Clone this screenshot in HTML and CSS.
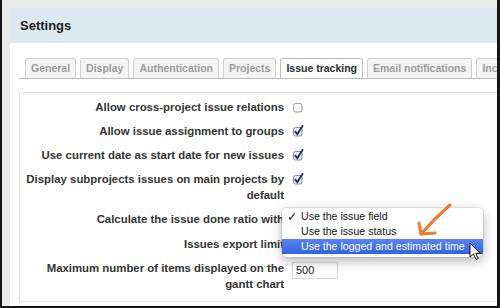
FILE: index.html
```html
<!DOCTYPE html>
<html lang="en">
  <head>
    <meta charset="UTF-8" />
    <title>Settings</title>
    <link rel="stylesheet" href="styles.css">
  </head>
  <body>
    <div class="window">
      <div class="panel">
        <div class="page-header">
          <h2>Settings</h2>
        </div>
        <div class="content">
          <ul class="tabs">
            <li>General</li>
            <li>Display</li>
            <li>Authentication</li>
            <li>Projects</li>
            <li class="selected">Issue tracking</li>
            <li>Email notifications</li>
            <li>Incoming emails</li>
          </ul>
          <div class="box">
            <div class="row">
              <label>Allow cross-project issue relations</label>
              <span class="check">
                <svg width="12" height="12" viewBox="0 0 12 12"><rect x="1.5" y="2.5" width="8.5" height="8.5" rx="2" fill="#fafafa" stroke="#9a9a9a"/></svg>
              </span>
            </div>
            <div class="row">
              <label>Allow issue assignment to groups</label>
              <span class="check">
                <svg width="12" height="12" viewBox="0 0 12 12"><rect x="1.5" y="2.5" width="8.5" height="8.5" rx="2" fill="#e9eef7" stroke="#7d89a3"/><path d="M3.3 6.6 L5.3 9.3 L10.6 1" fill="none" stroke="#1b2a5c" stroke-width="1.8" stroke-linecap="round" stroke-linejoin="round"/></svg>
              </span>
            </div>
            <div class="row">
              <label>Use current date as start date for new issues</label>
              <span class="check">
                <svg width="12" height="12" viewBox="0 0 12 12"><rect x="1.5" y="2.5" width="8.5" height="8.5" rx="2" fill="#e9eef7" stroke="#7d89a3"/><path d="M3.3 6.6 L5.3 9.3 L10.6 1" fill="none" stroke="#1b2a5c" stroke-width="1.8" stroke-linecap="round" stroke-linejoin="round"/></svg>
              </span>
            </div>
            <div class="row">
              <label>Display subprojects issues on main projects by default</label>
              <span class="check">
                <svg width="12" height="12" viewBox="0 0 12 12"><rect x="1.5" y="2.5" width="8.5" height="8.5" rx="2" fill="#e9eef7" stroke="#7d89a3"/><path d="M3.3 6.6 L5.3 9.3 L10.6 1" fill="none" stroke="#1b2a5c" stroke-width="1.8" stroke-linecap="round" stroke-linejoin="round"/></svg>
              </span>
            </div>
            <div class="row menu-row">
              <label>Calculate the issue done ratio with</label>
              <span class="select"></span>
              <ul class="dropdown">
                <li class="checked">Use the issue field</li>
                <li>Use the issue status</li>
                <li class="hover">Use the logged and estimated time</li>
              </ul>
            </div>
            <div class="row">
              <label>Issues export limit</label>
              <span class="field"></span>
            </div>
            <div class="row">
              <label>Maximum number of items displayed on the gantt chart</label>
              <span class="field">500</span>
            </div>
          </div>
        </div>
      </div>
      <svg class="arrow" width="85" height="80" viewBox="0 0 85 80">
        <path d="M40 15 Q25 28 11 44" fill="none" stroke="#ef7a2c" stroke-width="3" stroke-linecap="round"/>
        <path d="M9 33 L11 44 L25 43" fill="none" stroke="#ef7a2c" stroke-width="3" stroke-linecap="round" stroke-linejoin="round"/>
        <path d="M60 53 L60 67 L63.5 64 L66 69.5 L68.2 68.5 L65.8 63.3 L70.5 63.3 Z" fill="#f4f4f4" stroke="#111" stroke-width="1" stroke-linejoin="round"/>
      </svg>
    </div>
  </body>
</html>
```

FILE: styles.css
```css
html,
body {
  margin: 0;
  padding: 0;
  font-family: "Liberation Sans", Arial, sans-serif;
  color: #333;
}

.window {
  position: relative;
  height: 308px;
  box-sizing: border-box;
  border-left: 2px solid #161616;
  border-right: 3px solid #161616;
  border-bottom: 2px solid #161616;
  background: #e9e9e9;
  padding: 8px 0 0 8px;
  display: flex;
  flex-direction: column;
  overflow: hidden;
}

.panel {
  flex: 1;
  min-height: 0;
  background: #ffffff;
  display: flex;
  flex-direction: column;
  overflow: hidden;
}

.page-header {
  height: 35px;
  flex-shrink: 0;
  background: #dde9f0;
  padding-left: 10px;
  display: flex;
  align-items: center;
}

.page-header h2 {
  margin: 0;
  font-size: 13px;
  color: #1c1c1c;
}

.content {
  padding: 15px 0 0 9px;
}

.tabs {
  display: flex;
  gap: 4px;
  margin: 0;
  padding: 0 0 0 6px;
  list-style: none;
  height: 20px;
  border-bottom: 1px solid #bcbcbc;
  overflow: hidden;
  white-space: nowrap;
}

.tabs li {
  flex-shrink: 0;
  height: 19px;
  line-height: 19px;
  padding: 0 5px;
  font-size: 10.5px;
  font-weight: bold;
  color: #9b9b9b;
  background: #f4f4f4;
  border: 1px solid #cfcfcf;
  border-bottom: none;
  border-radius: 3px 3px 0 0;
}

.tabs li.selected {
  color: #2e2e2e;
  background: #ffffff;
  border-color: #bcbcbc;
  height: 20px;
}

.box {
  margin: 13px -6px 0 0;
  padding: 2px 0 5px;
  border: 1px solid #e2e2e2;
  background: #ffffff;
}

.row {
  display: flex;
  align-items: flex-start;
  padding: 4px 0;
  line-height: 16px;
}

.row label {
  width: 264px;
  flex-shrink: 0;
  text-align: right;
  font-size: 11.4px;
  font-weight: bold;
  color: #333;
}

.check {
  margin-left: 8px;
  margin-top: 1px;
  height: 12px;
}

.select {
  margin-left: 8px;
  width: 150px;
  height: 15px;
  border: 1px solid #c8c8c8;
  border-radius: 3px;
}

.field {
  margin: 2px 0 -3px 8px;
  width: 41px;
  height: 15px;
  line-height: 15px;
  padding-left: 3px;
  border: 1px solid #d6d6d6;
  font-size: 11px;
  color: #222;
}

.menu-row {
  position: relative;
}

.dropdown {
  position: absolute;
  left: 262px;
  top: 1px;
  width: 201px;
  margin: 0;
  padding: 1px 0 3px;
  list-style: none;
  background: rgba(255, 255, 255, 0.98);
  border-radius: 5px;
  box-shadow: 0 4px 12px rgba(0, 0, 0, 0.3), 0 0 0 1px rgba(0, 0, 0, 0.08);
  font-size: 10.6px;
  color: #151515;
}

.dropdown li {
  position: relative;
  height: 15px;
  line-height: 15px;
  padding-left: 19px;
}

.dropdown li.checked::before {
  content: "\2713";
  position: absolute;
  left: 5px;
  top: 0;
  font-family: "DejaVu Sans", sans-serif;
  font-size: 12.5px;
  font-weight: bold;
}

.dropdown li.hover {
  color: #ffffff;
  background: linear-gradient(#5b84f1, #3262e3);
}

.arrow {
  position: absolute;
  left: 408px;
  top: 190px;
}
```
